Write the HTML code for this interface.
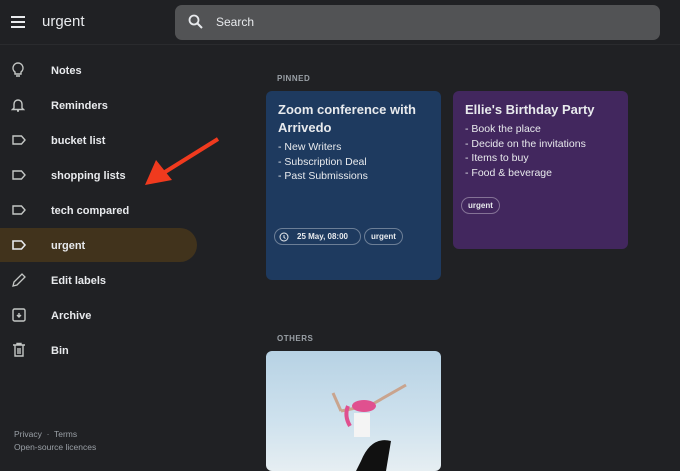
<!DOCTYPE html>
<html><head><style>
*{margin:0;padding:0;box-sizing:border-box}
body{width:680px;height:461px;background:#202124;font-family:"Liberation Sans",sans-serif;color:#e8eaed;position:relative;overflow:hidden}
.a{position:absolute}
.nav{position:absolute;left:0;width:197px;height:34px}
.nav span{position:absolute;left:51px;top:12px;font-size:11px;font-weight:bold;color:#e8eaed}
.nav svg{position:absolute;left:11px;top:9px}
.card{position:absolute;border-radius:6px;padding:10px 12px}
.t{font-size:13px;font-weight:bold;line-height:18px;margin-bottom:3px}
.l{font-size:10.5px;line-height:14.6px}
.chip{position:absolute;border:1px solid rgba(255,255,255,.35);border-radius:10px;font-size:8px;font-weight:bold;height:17px;line-height:15px;padding:0 6px}
</style></head><body>
<div class="a" style="left:0;top:0;width:680px;height:45px;border-bottom:1px solid #2a2b2e"></div>
<svg class="a" style="left:11px;top:16px" width="15" height="12"><rect y="0" width="14" height="2" fill="#e8eaed"/><rect y="5" width="14" height="2" fill="#e8eaed"/><rect y="10" width="14" height="2" fill="#e8eaed"/></svg>
<div class="a" style="left:42px;top:13px;font-size:15px;color:#e8eaed">urgent</div>
<div class="a" style="left:175px;top:5px;width:485px;height:35px;background:#525355;border-radius:7px"></div>
<svg class="a" style="left:188px;top:14px" width="16" height="16"><circle cx="6" cy="6" r="4.5" stroke="#e8eaed" stroke-width="1.8" fill="none"/><line x1="9.5" y1="9.5" x2="14" y2="14" stroke="#e8eaed" stroke-width="2"/></svg>
<div class="a" style="left:216px;top:15px;font-size:12px;color:#e8eaed">Search</div>

<div class="a" style="left:0;top:228px;width:197px;height:34px;background:#41331c;border-radius:0 17px 17px 0"></div>
<div class="nav" style="top:53px"><svg width="14" height="16"><path d="M7 1a5 5 0 0 0-3 9v2h6v-2a5 5 0 0 0-3-9z M5 14h4" stroke="#c4c7c5" stroke-width="1.4" fill="none"/></svg><span>Notes</span></div>
<div class="nav" style="top:88px"><svg width="14" height="16"><path d="M3 11V7a4 4 0 0 1 8 0v4l1.5 1.5h-11z M6 14h2" stroke="#c4c7c5" stroke-width="1.4" fill="none"/></svg><span>Reminders</span></div>
<div class="nav" style="top:123px"><svg width="16" height="16"><path d="M2 4h8.5l3.5 4-3.5 4H2z" stroke="#c4c7c5" stroke-width="1.4" fill="none"/></svg><span>bucket list</span></div>
<div class="nav" style="top:158px"><svg width="16" height="16"><path d="M2 4h8.5l3.5 4-3.5 4H2z" stroke="#c4c7c5" stroke-width="1.4" fill="none"/></svg><span>shopping lists</span></div>
<div class="nav" style="top:193px"><svg width="16" height="16"><path d="M2 4h8.5l3.5 4-3.5 4H2z" stroke="#c4c7c5" stroke-width="1.4" fill="none"/></svg><span>tech compared</span></div>
<div class="nav" style="top:228px"><svg width="16" height="16"><path d="M2 4h8.5l3.5 4-3.5 4H2z" stroke="#e8eaed" stroke-width="1.6" fill="none"/></svg><span>urgent</span></div>
<div class="nav" style="top:263px"><svg width="16" height="16"><path d="M2 14l1-4 8-8 3 3-8 8z" stroke="#c4c7c5" stroke-width="1.3" fill="none"/></svg><span>Edit labels</span></div>
<div class="nav" style="top:298px"><svg width="16" height="16"><rect x="2" y="2" width="12" height="12" rx="1.5" stroke="#c4c7c5" stroke-width="1.4" fill="none"/><path d="M8 6v4M6 8l2 2 2-2" stroke="#c4c7c5" stroke-width="1.4" fill="none"/></svg><span>Archive</span></div>
<div class="nav" style="top:333px"><svg width="16" height="16"><path d="M2 3h12M4 3v11h8V3M7 6v6M9 6v6M6 3V1.5h4V3" stroke="#c4c7c5" stroke-width="1.4" fill="none"/></svg><span>Bin</span></div>
<div class="a" style="left:14px;top:429px;font-size:8.5px;color:#9aa0a6">Privacy &nbsp;·&nbsp; Terms</div>
<div class="a" style="left:14px;top:442px;font-size:8.5px;color:#9aa0a6">Open-source licences</div>

<svg class="a" style="left:0;top:0" width="680" height="461"><line x1="218" y1="139" x2="165" y2="172" stroke="#f03a1e" stroke-width="4"/><polygon points="145,185 156,160 172,180" fill="#f03a1e"/></svg>

<div class="a" style="left:277px;top:74px;font-size:8px;font-weight:bold;color:#9aa0a6;letter-spacing:.5px">PINNED</div>
<div class="card" style="left:266px;top:91px;width:175px;height:189px;background:#1e3a5f">
<div class="t">Zoom conference with Arrivedo</div>
<div class="l">- New Writers<br>- Subscription Deal<br>- Past Submissions</div>
<div class="chip" style="left:8px;top:137px;width:87px;padding-left:22px">25 May, 08:00</div>
<svg class="a" style="left:13px;top:141px" width="10" height="10"><circle cx="5" cy="5" r="4" stroke="#e8eaed" fill="none"/><path d="M5 3v2.5l1.5 1" stroke="#e8eaed" fill="none"/></svg>
<div class="chip" style="left:98px;top:137px">urgent</div>
</div>
<div class="card" style="left:453px;top:91px;width:175px;height:158px;background:#42275e">
<div class="t">Ellie's Birthday Party</div>
<div class="l">- Book the place<br>- Decide on the invitations<br>- Items to buy<br>- Food &amp; beverage</div>
<div class="chip" style="left:8px;top:106px">urgent</div>
</div>
<div class="a" style="left:277px;top:334px;font-size:8px;font-weight:bold;color:#9aa0a6;letter-spacing:.5px">OTHERS</div>
<div class="a" style="left:266px;top:351px;width:175px;height:120px;border-radius:6px;overflow:hidden;background:linear-gradient(180deg,#b7d2e4,#cfe2ee 60%,#e6eef2)">
<svg width="175" height="120"><path d="M75 60l30-6 35-20" stroke="#c9a48e" stroke-width="3" fill="none"/><path d="M75 60l-8-18" stroke="#c9a48e" stroke-width="3" fill="none"/><ellipse cx="98" cy="55" rx="12" ry="6" fill="#e0508f"/><path d="M82 55q-4 10 2 20" stroke="#e0508f" stroke-width="4" fill="none"/><rect x="88" y="62" width="16" height="24" fill="#f4f4f4"/><path d="M95 110q10-25 30-20l-5 30h-30z" fill="#111"/></svg>
</div>
</body></html>
